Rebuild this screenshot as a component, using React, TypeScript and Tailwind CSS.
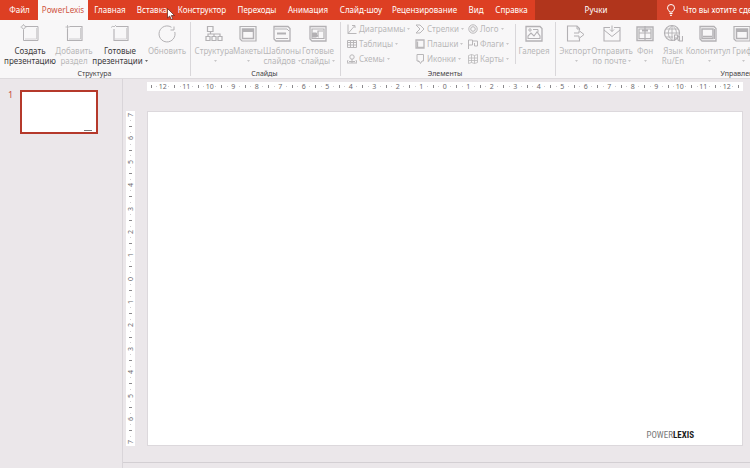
import { ReactNode } from "react";

type Tool = {
    lines: string[]
    width: string
    icon: ReactNode
    menu?: boolean
    disabled?: boolean
}

const tabs = [
    { name: 'Файл', width: 'w-[37px]' },
    { name: 'PowerLexis', width: 'w-[50px]', active: true },
    { name: 'Главная', width: 'w-[44px]' },
    { name: 'Вставка', width: 'w-[40px]' },
    { name: 'Конструктор', width: 'w-[60px]' },
    { name: 'Переходы', width: 'w-[50px]' },
    { name: 'Анимация', width: 'w-[52px]' },
    { name: 'Слайд-шоу', width: 'w-[54px]' },
    { name: 'Рецензирование', width: 'w-[73px]' },
    { name: 'Вид', width: 'w-[30px]' },
    { name: 'Справка', width: 'w-[41px]' },
]

const Icon = ({ children, small }: { children: ReactNode, small?: boolean }) => (
    <svg viewBox={small ? '0 0 10 10' : '0 0 20 20'} className={small ? 'size-[10px] shrink-0' : 'size-5 shrink-0'} fill="none" stroke="currentColor" strokeWidth="1" aria-hidden="true">
        {children}
    </svg>
)

const Arrow = () => (
    <svg viewBox="0 0 4 2" className="inline-block w-[3px] h-0.5 ml-0.5 mb-0.5" fill="currentColor" aria-hidden="true">
        <path d="M0 0h4L2 2z" />
    </svg>
)

const newSlide = (
    <Icon>
        <path d="M5 2.5h13v14H3.500V6" strokeWidth="1" />
        <path d="M16.500 4v11H5" opacity=".5" />
        <circle cx="3.500" cy="3" r="1.800" strokeWidth=".8" />
        <path d="M3.500 0v1M3.500 5v1M.5 3h1M5.500 3h1" strokeWidth=".7" />
    </Icon>
)

const addSection = (
    <Icon>
        <path d="M5.500 2.5H18v14H3.500V5" strokeWidth="1.1" />
        <path d="M16.500 4v11H5" opacity=".6" />
        <path d="M3.500 1v4M1.500 3h4" strokeWidth=".8" />
    </Icon>
)

const readyDeck = (
    <Icon>
        <path d="M6 2.5h12v14H4V5" strokeWidth="1.1" />
        <path d="M16.500 4v11H5" opacity=".5" />
        <path d="M1 3.500l2-1.500 1 1 2-2" strokeWidth=".8" />
    </Icon>
)

const refresh = (
    <Icon>
        <path d="M14.500 3.300A8 8 0 1 0 17.800 8" strokeWidth="1" />
        <path d="M13.500 6h3.500V2.500" strokeWidth="1" />
    </Icon>
)

const structure = (
    <Icon>
        <path d="M3.500 2.5H9v5H3.500zM2 12.500h4v4H2zM8 12.500h4v4H8zM14 12.500h4v4h-4zM4 12.500V10h12v2.500M6.500 7.500V10M10 10v2.500" strokeWidth="1.2" />
    </Icon>
)

const layouts = (
    <Icon>
        <path d="M2 2.5h16V17H4l-2-2z" strokeWidth="1.2" />
        <path d="M4.500 5h11v9.500h-11z" strokeWidth="1.5" />
        <path d="M5 5.5h10v2H5z" fill="currentColor" />
    </Icon>
)

const templates = (
    <Icon>
        <path d="M2 2.5h14l2 2V17H4l-2-2z" strokeWidth="1.3" />
        <path d="M3 5h12M4 14.500h12M15 5l2 2" strokeWidth="1" />
        <path d="M5 8.500h9v2H5z" fill="currentColor" stroke="none" />
    </Icon>
)

const readySlides = (
    <Icon>
        <path d="M2 2.500h16V17H4l-2-2z" strokeWidth="1.3" />
        <path d="M4 5h12v9.500H4z" strokeWidth="1.2" />
        <path d="M4.500 9h4v4h-4z" fill="currentColor" />
        <path d="M7 10l3 2.500V7h5" strokeWidth="1.2" />
    </Icon>
)

const gallery = (
    <Icon>
        <path d="M2 2.500h14l2 2V17H2z" strokeWidth="1.3" />
        <path d="M4 14.500V12l3-3 3 3 3-4 3 4v2.500z" strokeWidth="1.1" />
        <path d="M9 5.500h5v3" />
        <circle cx="6" cy="6" r="1.200" />
    </Icon>
)

const exportFile = (
    <Icon>
        <path d="M14.500 6V4.500l-2.500-2.500H2.500v15h12v-2.500" strokeWidth="1.1" />
        <path d="M12 2v3h2.500M9 9h5V6.500l5 4-5 4V12H9" strokeWidth="1" />
    </Icon>
)

const mail = (
    <Icon>
        <path d="M8 3.500H2V17h16V3.500h-6" strokeWidth="1.1" />
        <path d="M2 6l8 6.500L18 6M10 1.500v6M8 5.500l2 2 2-2" strokeWidth="1" />
    </Icon>
)

const background = (
    <Icon>
        <path d="M2 3h16v13.500H2z" strokeWidth="1.4" />
        <path d="M4 5h12v9.500H4zM10 2v15M4 9h12" strokeWidth="1.2" />
        <path d="M7 5.500h6v2H7z" fill="currentColor" stroke="none" />
    </Icon>
)

const language = (
    <Icon>
        <circle cx="9" cy="9" r="7.500" strokeWidth="1.2" />
        <path d="M9 1.500v15M1.500 9h15M3 5h12M3 13h7M9 1.500c-5 5-5 10 0 15M9 1.500c4 3 5 6 4 9" strokeWidth=".9" />
        <path d="M11.500 17v-6h3v3h-3M14.500 14l1 3M16.500 12v5h3v-5" strokeWidth="1.100" />
    </Icon>
)

const footer = (
    <Icon>
        <path d="M2 2.500h14l2 2V17H4l-2-2z" strokeWidth="1.3" />
        <path d="M4 5h11v9.500H4zM5 12.500h9" strokeWidth="1.5" />
        <path d="M16.500 5v10" />
    </Icon>
)

const structureTools: Tool[] = [
    { lines: ['Создать', 'презентацию'], width: 'w-[54px]', icon: newSlide },
    { lines: ['Добавить', 'раздел'], width: 'w-[34px]', icon: addSection, disabled: true },
    { lines: ['Готовые', 'презентации'], width: 'w-[58px]', icon: readyDeck, menu: true },
    { lines: ['Обновить'], width: 'w-[36px]', icon: refresh, disabled: true },
]

const slideTools: Tool[] = [
    { lines: ['Структура'], width: 'w-[38px]', icon: structure, menu: true, disabled: true },
    { lines: ['Макеты'], width: 'w-[30px]', icon: layouts, menu: true, disabled: true },
    { lines: ['Шаблоны', 'слайдов'], width: 'w-[38px]', icon: templates, menu: true, disabled: true },
    { lines: ['Готовые', 'слайды'], width: 'w-[34px]', icon: readySlides, menu: true, disabled: true },
]

const manageTools: Tool[] = [
    { lines: ['Экспорт'], width: 'w-[38px]', icon: exportFile, menu: true, disabled: true },
    { lines: ['Отправить', 'по почте'], width: 'w-[36px]', icon: mail, menu: true, disabled: true },
    { lines: ['Фон'], width: 'w-[30px]', icon: background, menu: true, disabled: true },
    { lines: ['Язык', 'Ru/En'], width: 'w-[26px]', icon: language, disabled: true },
    { lines: ['Колонтитул'], width: 'w-[44px]', icon: footer, menu: true, disabled: true },
    { lines: ['Гриф'], width: 'w-[24px]', icon: layouts, menu: true, disabled: true },
]

const elementColumns = [
    {
        width: 'w-[68px]',
        items: [
            { name: 'Диаграммы', icon: <path d="M1 .5v9h8.500M1 9.500L7.500 2M5 1.500h3v2.500" /> },
            { name: 'Таблицы', icon: <path d="M.5 1.500h9v7h-9zM.5 3.500h9M.5 6h9M3.500 1.500v7M6.500 1.500v7" /> },
            { name: 'Схемы', icon: <><circle cx="5" cy="3" r="2.200" /><path d="M5 5v4M1 6l-1 3h10L9 6M2 7.500h6" /></> },
        ],
    },
    {
        width: 'w-[53px]',
        items: [
            { name: 'Стрелки', icon: <path d="M1 1h4l4 4-4 4H1l4-4z" /> },
            { name: 'Плашки', icon: <path d="M1 1h8v8H1zM2.500 2.500v6h6" strokeWidth="1.3" /> },
            { name: 'Иконки', icon: <path d="M2 .5h6.500V7H7L5.500 9.500 4 7H2zM3.500 7v1" /> },
        ],
    },
    {
        width: 'w-[47px]',
        items: [
            { name: 'Лого', icon: <><circle cx="5" cy="5" r="4.200" /><circle cx="5" cy="5" r="2.300" /></> },
            { name: 'Флаги', icon: <path d="M.5 10V1h4v5h-4M4.500 2h5v5h-3V4" /> },
            { name: 'Карты', icon: <path d="M.5 1.500l3-1 3 1 3-1v8l-3 1-3-1-3 1zM3.500.5v8M6.500 1.500v8M.5 4h9M.5 6.500h9" strokeWidth=".8" /> },
        ],
    },
]

const ToolButton = ({ lines, width, icon, menu, disabled }: Tool) => (
    <button type="button" disabled={disabled} className={`${width} ${disabled ? 'text-[#b9b7b9]' : 'text-[#3c3a3c]'} flex flex-col items-center gap-0.5 shrink-0 whitespace-nowrap`}>
        <span className="text-[#b3b1b4]">{icon}</span>
        <span className="flex flex-col items-center">
            {lines.map((line, index) => (
                <span key={line}>{line}{menu && index === 1 && <Arrow />}</span>
            ))}
            {menu && lines.length === 1 && <span><Arrow /></span>}
        </span>
    </button>
)

const Group = ({ title, className, children }: { title: string, className: string, children: ReactNode }) => (
    <section aria-label={title} className={`${className} flex flex-col justify-between shrink-0 pt-1`}>
        <div className="flex items-start min-h-[45px]">{children}</div>
        <h2 className="text-center text-[7px] text-[#444244]">{title}</h2>
    </section>
)

const Divider = ({ className }: { className: string }) => (
    <div className={`${className} w-px shrink-0 bg-[#d9d7da]`} />
)

// one item for every quarter of a unit, numbers fall on whole units
const Ruler = ({ max, half, vertical }: { max: number, half?: boolean, vertical?: boolean }) => {
    const limit = max * 4 + (half ? 2 : 0)
    const marks = Array.from({ length: limit * 2 + 1 }, (_, index) => index - limit)

    return (
        <div aria-hidden="true" className={`${vertical ? 'flex-col w-[9px] py-1' : 'h-[9px] px-1'} flex justify-between items-center bg-white text-[7px] leading-none text-[#6d6b6e]`}>
            {marks.map(mark => (
                <div key={mark} className={`${vertical ? 'h-0 w-full' : 'w-0 h-full'} flex items-center justify-center`}>
                    {mark % 4 === 0 && <span className={vertical ? '[writing-mode:vertical-rl] rotate-180' : ''}>{Math.abs(mark / 4)}</span>}
                    {Math.abs(mark % 4) === 2 && <span className={`${vertical ? 'w-[3px] h-px' : 'w-px h-[3px]'} shrink-0 bg-[#8a888b]`} />}
                    {mark % 2 !== 0 && <span className="size-px shrink-0 bg-[#cfcdd0]" />}
                </div>
            ))}
        </div>
    )
}

const TabBar = () => (
    <nav className="relative flex items-stretch h-5 pl-px bg-[#dd3f23] text-white overflow-hidden whitespace-nowrap">
        {tabs.map(tab => (
            <button key={tab.name} type="button" className={`${tab.width} ${tab.active ? 'bg-[#faf8f8] text-[#d0553f]' : ''} flex items-center justify-center shrink-0`}>
                {tab.name}
            </button>
        ))}
        <button type="button" className="w-[122px] ml-[3px] shrink-0 bg-[#b1351c]">Ручки</button>
        <label className="flex items-center flex-1 gap-2 pl-2.5 min-w-0 bg-[#d4432a]">
            <svg viewBox="0 0 8 12" className="w-2 h-3 shrink-0" fill="none" stroke="currentColor" aria-hidden="true">
                <path d="M2.500 8c0-1.500-2-2-2-4.200a3.500 3.300 0 0 1 7 0C7.500 6 5.500 6.500 5.500 8zM2.500 9.500h3M3 11.300h2" />
            </svg>
            <input type="text" aria-label="Помощник" placeholder="Что вы хотите сделать?" className="w-[100px] shrink-0 bg-transparent outline-none placeholder:text-white" />
        </label>
        <svg viewBox="0 0 8 12" className="absolute left-[167px] top-2 w-2 h-3" fill="white" stroke="#5e211a" strokeWidth=".7" aria-hidden="true">
            <path d="M.5.5v9.500l2.200-2L4.300 11.500l1.500-.7L4.300 7.500h3.200z" />
        </svg>
    </nav>
)

const Ribbon = () => (
    <div className="flex items-stretch h-[59px] bg-[#f8f7f8] border-b border-[#dddadd] overflow-hidden">
        <Group title="Структура" className="w-[190px] pl-[3px] pr-1">
            {structureTools.map(tool => <ToolButton key={tool.lines[0]} {...tool} />)}
        </Group>
        <Divider className="my-0.5" />
        <Group title="Слайды" className="w-[149px] pl-1 pr-1.5">
            {slideTools.map(tool => <ToolButton key={tool.lines[0]} {...tool} />)}
        </Group>
        <Divider className="my-0.5" />
        <Group title="Элементы" className="w-[214px] pl-1.5 pr-3">
            {elementColumns.map(column => (
                <div key={column.width} className={`${column.width} flex flex-col gap-[5px] shrink-0`}>
                    {column.items.map(item => (
                        <button key={item.name} type="button" disabled className="flex items-center gap-0.5 whitespace-nowrap text-[#b9b7b9]">
                            <Icon small>{item.icon}</Icon>
                            <span>{item.name}<Arrow /></span>
                        </button>
                    ))}
                </div>
            ))}
            <Divider className="h-10" />
            <ToolButton lines={['Галерея']} width="w-[36px]" icon={gallery} disabled />
        </Group>
        <Divider className="my-0.5" />
        <Group title="Управление" className="w-[370px]">
            {manageTools.map(tool => <ToolButton key={tool.lines[0]} {...tool} />)}
        </Group>
    </div>
)

const App = () => {
    return (
        <div className="flex flex-col min-h-screen bg-[#ebe7ea] overflow-hidden font-['Noto_Sans','Open_Sans',sans-serif] text-[8px] leading-[10px]">
            <TabBar />
            <Ribbon />
            <div className="flex flex-1">
                <aside className="flex items-start gap-2 w-[123px] shrink-0 pt-[11px] pl-2 border-r border-[#d9d5d9]">
                    <span className="w-1 text-[9px] text-[#c9503d]">1</span>
                    <button type="button" aria-label="Слайд 1" className="flex items-end justify-end w-[78px] aspect-video p-1 pb-px bg-white border-2 border-[#b5392b]">
                        <span className="w-2 h-px bg-[#777]" />
                    </button>
                </aside>
                <main className="flex flex-col flex-1 min-w-0">
                    <div className="flex-1 grid grid-cols-[9px_1fr] grid-rows-[9px_auto] content-start gap-x-3 gap-y-5 pt-[3px] pl-[3px] pr-[7px] mb-4">
                        <div />
                        <Ruler max={12} half />
                        <Ruler max={7} vertical />
                        <div className="flex items-end justify-end aspect-video pr-[48px] pb-[3px] bg-white border border-[#dcd8dc]">
                            <div className="font-['Roboto_Condensed','Open_Sans_Condensed','Noto_Sans_ExtraCondensed','Liberation_Sans',sans-serif] text-[9px] leading-[14px] text-[#777]">
                                POWER<b className="text-[#1d1d1d]">LEXIS</b>
                            </div>
                        </div>
                    </div>
                    <div className="h-1.5 border-t border-[#d3cfd3]" />
                </main>
            </div>
        </div>
    )
}

export default App
